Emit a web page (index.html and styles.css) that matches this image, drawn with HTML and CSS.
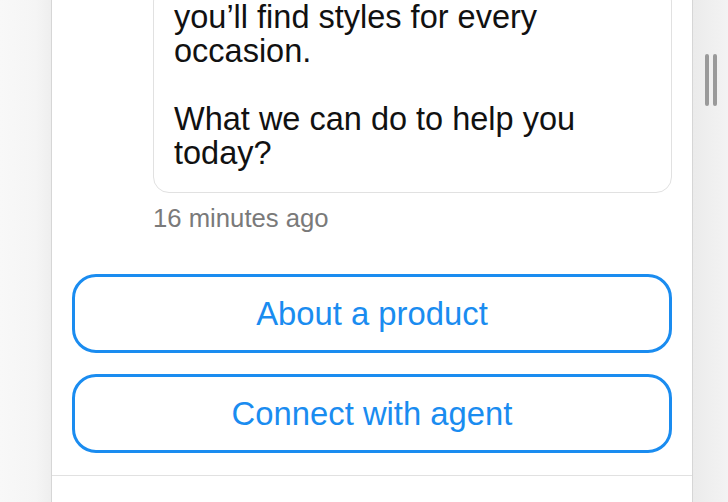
FILE: index.html
```html
<!DOCTYPE html>
<html lang="en">
<head>
  <meta charset="UTF-8" />
  <meta name="viewport" content="width=device-width, initial-scale=1" />
  <title>Chat</title>
  <link rel="stylesheet" href="styles.css">
</head>
<body>
<div class="side side-left"></div>

<main class="chat">
  <div class="messages">
    <div class="bubble">
      <p>you’ll find styles for every occasion.</p>
      <p>What we can do to help you today?</p>
    </div>
    <div class="time">16 minutes ago</div>

    <div class="replies">
      <button class="reply-btn">About a product</button>
      <button class="reply-btn">Connect with agent</button>
    </div>
  </div>
  <div class="composer"></div>
</main>

<div class="side side-right">
  <div class="grip">
    <span></span>
    <span></span>
  </div>
</div>
</body>
</html>
```

FILE: styles.css
```css
:root {
  --blue: #1a8cf0;
  --text-main: #111111;
  --text-muted: #7a7a7a;
  --line: #e1e1e1;
  --edge: #d6d6d6;
}

html, body {
  height: 100%;
}

body {
  margin: 0;
  font-family: "Liberation Sans", Arial, Helvetica, sans-serif;
  color: var(--text-main);
  display: flex;
  overflow: hidden;
}

.side-left {
  width: 51px;
  background: linear-gradient(to right, #f8f8f8, #f5f5f5 70%, #eeeeee);
  border-right: 1px solid var(--edge);
}

.side-right {
  width: 35px;
  background: linear-gradient(to right, #ebebeb, #f3f3f3);
  border-left: 1px solid var(--edge);
}

.grip {
  display: flex;
  gap: 4px;
  padding: 54px 0 0 12px;
}

.grip span {
  width: 4px;
  height: 52px;
  border-radius: 2px;
  background: #9a9a9a;
}

.chat {
  flex: 1;
  background: #ffffff;
  display: flex;
  flex-direction: column;
  height: 100%;
}

.messages {
  flex: 1;
  display: flex;
  flex-direction: column;
  justify-content: flex-end;
  overflow: hidden;
  padding: 0 20px 22px;
}

.bubble {
  margin-left: 81px;
  padding: 14px 20px 22px;
  border: 1.5px solid var(--line);
  border-radius: 16px;
  font-size: 32.5px;
  line-height: 34px;
}

.bubble p {
  margin: 0;
}

.bubble p + p {
  margin-top: 34px;
}

.time {
  margin: 10px 0 0 81px;
  font-size: 25.7px;
  line-height: 30px;
  color: var(--text-muted);
}

.replies {
  margin-top: 41px;
  display: flex;
  flex-direction: column;
  gap: 21px;
}

.reply-btn {
  height: 79px;
  border: 3px solid var(--blue);
  border-radius: 24px;
  background: #ffffff;
  color: var(--blue);
  font-family: inherit;
  font-size: 32.8px;
  cursor: pointer;
}

.composer {
  height: 26px;
  border-top: 1px solid var(--line);
}
```
